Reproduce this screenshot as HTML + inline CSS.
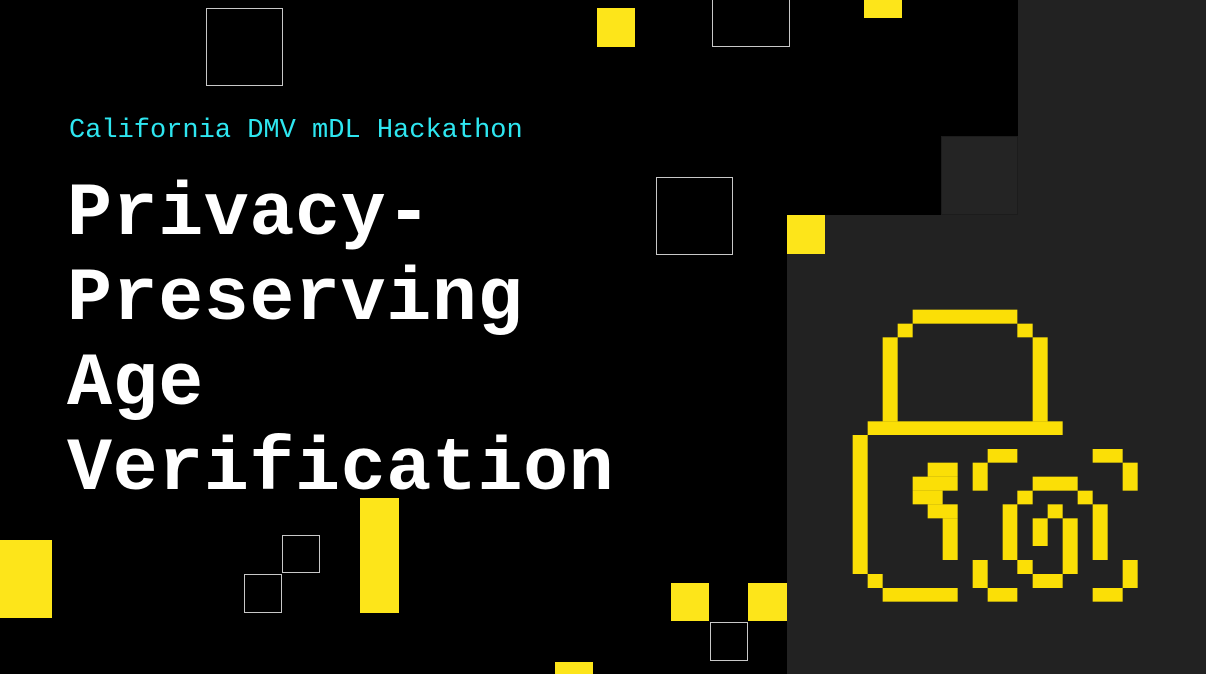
<!DOCTYPE html>
<html><head><meta charset="utf-8"><style>
html,body{margin:0;padding:0;}
body{width:1206px;height:674px;background:#000;position:relative;overflow:hidden;}
.a{position:absolute;}
.g{background:#222;}
.y{background:#fde51a;}
.o{border:1px solid #c8c8c8;box-sizing:border-box;}
.sub{position:absolute;left:69px;top:118px;font:27px/1 "Liberation Mono",monospace;color:#2ee6f0;white-space:nowrap;}
.t{position:absolute;left:67px;top:172px;font:bold 75px/85px "Liberation Mono",monospace;color:#fff;white-space:nowrap;letter-spacing:0.6px;}
</style></head><body>
<div class="a g" style="left:1018px;top:0;width:188px;height:674px"></div>
<div class="a g" style="left:787px;top:215px;width:231px;height:459px"></div>
<div class="a" style="left:941px;top:136px;width:77px;height:79px;background:#242424;border:1px solid #1c1c1c;box-sizing:border-box"></div>

<div class="a y" style="left:597px;top:8px;width:38px;height:39px"></div>
<div class="a y" style="left:864px;top:0;width:38px;height:18px"></div>
<div class="a y" style="left:787px;top:215px;width:38px;height:39px"></div>
<div class="a y" style="left:0;top:540px;width:52px;height:78px"></div>
<div class="a y" style="left:360px;top:498px;width:39px;height:115px"></div>
<div class="a y" style="left:671px;top:583px;width:38px;height:38px"></div>
<div class="a y" style="left:748px;top:583px;width:39px;height:38px"></div>
<div class="a y" style="left:555px;top:662px;width:38px;height:12px"></div>

<div class="a o" style="left:206px;top:8px;width:77px;height:78px"></div>
<div class="a o" style="left:712px;top:-2px;width:78px;height:49px"></div>
<div class="a o" style="left:656px;top:177px;width:77px;height:78px"></div>
<div class="a o" style="left:282px;top:535px;width:38px;height:38px"></div>
<div class="a o" style="left:244px;top:574px;width:38px;height:39px"></div>
<div class="a o" style="left:710px;top:622px;width:38px;height:39px"></div>

<div class="sub">California DMV mDL Hackathon</div>
<div class="t">Privacy-<br>Preserving<br>Age<br>Verification</div>

<svg class="a" style="left:840px;top:300px" width="310" height="310" viewBox="0 0 930 930" fill="#fbdf06">
<rect x="218" y="29" width="314" height="42"/>
<rect x="173" y="71" width="45" height="41"/>
<rect x="532" y="71" width="46" height="41"/>
<rect x="128" y="112" width="45" height="252"/>
<rect x="578" y="112" width="45" height="252"/>
<rect x="83" y="364" width="585" height="41"/>
<rect x="38" y="405" width="45" height="417"/>
<rect x="83" y="822" width="45" height="42"/>
<rect x="128" y="864" width="225" height="41"/>
<rect x="263" y="488" width="90" height="42"/>
<rect x="218" y="530" width="135" height="42"/>
<rect x="218" y="572" width="90" height="41"/>
<rect x="263" y="613" width="90" height="42"/>
<rect x="308" y="655" width="45" height="125"/>
<rect x="443" y="447" width="89" height="41"/>
<rect x="398" y="488" width="45" height="84"/>
<rect x="758" y="447" width="90" height="41"/>
<rect x="848" y="488" width="45" height="84"/>
<rect x="398" y="780" width="45" height="84"/>
<rect x="443" y="864" width="89" height="41"/>
<rect x="848" y="780" width="45" height="84"/>
<rect x="758" y="864" width="90" height="41"/>
<rect x="578" y="530" width="135" height="42"/>
<rect x="532" y="572" width="46" height="41"/>
<rect x="713" y="572" width="45" height="41"/>
<rect x="488" y="613" width="44" height="167"/>
<rect x="758" y="613" width="45" height="167"/>
<rect x="623" y="613" width="45" height="42"/>
<rect x="578" y="655" width="45" height="83"/>
<rect x="668" y="655" width="45" height="167"/>
<rect x="532" y="780" width="46" height="42"/>
<rect x="578" y="822" width="90" height="42"/>
</svg>
</body></html>
